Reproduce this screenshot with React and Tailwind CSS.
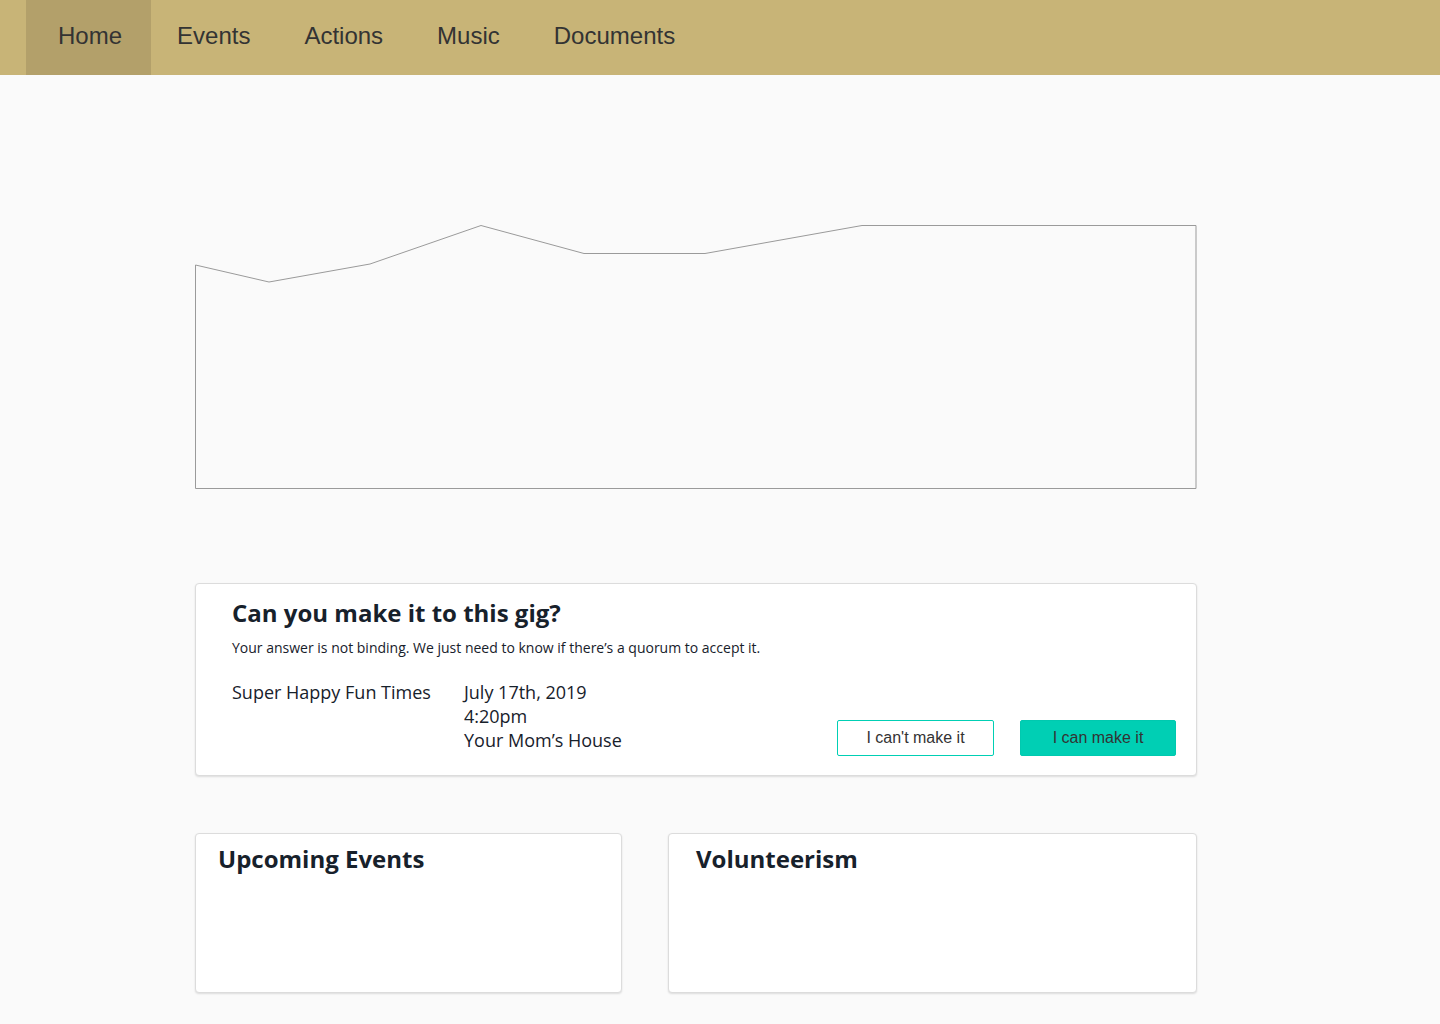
export default function App() {
  const sans = { fontFamily: '"Open Sans", sans-serif' };
  return (
    <div className="min-h-[1024px] w-full bg-[#fafafa]">
      <nav className="flex h-[75px] items-stretch bg-[#c8b477] pl-[26px] font-['Liberation_Sans',Arial,sans-serif] text-[24px] text-[#333333]">
        <a className="flex items-center bg-[#b3a06a] pb-[3px] pl-[32px] pr-[29px]">Home</a>
        <a className="flex items-center pb-[3px] pl-[26px] pr-[27px]">Events</a>
        <a className="flex items-center pb-[3px] px-[27px]">Actions</a>
        <a className="flex items-center pb-[3px] px-[27px]">Music</a>
        <a className="flex items-center pb-[3px] px-[27px]">Documents</a>
      </nav>

      <main className="ml-[195px] w-[1002px]" style={sans}>
        <div className="mt-[149px] h-[265px]">
          <svg width="1002" height="265" viewBox="0 0 1002 265" className="block">
            <polygon
              points="0.5,41 74,58 175,40 286,1.5 389,29.5 510,29.5 667,1.5 1001,1.5 1001,264.5 0.5,264.5"
              fill="none"
              stroke="#9a9a9a"
              strokeWidth="1"
            />
          </svg>
        </div>

        <section className="mt-[94px] h-[193px] rounded-[4px] border border-[#dcdcdc] bg-white pl-[36px] pr-[20px] pt-[12px] shadow-[0_1px_2px_rgba(0,0,0,0.12)]">
          <h2 className="text-[24px] font-bold leading-[33px] text-[#17212b]">Can you make it to this gig?</h2>
          <p className="mt-[9px] text-[14px] leading-[20px] text-[#17212b]">
            Your answer is not binding. We just need to know if there’s a quorum to accept it.
          </p>
          <div className="mt-[22px] flex items-start text-[18px] leading-[24px] text-[#17212b]">
            <div className="w-[232px]">Super Happy Fun Times</div>
            <div>
              <div>July 17th, 2019</div>
              <div>4:20pm</div>
              <div>Your Mom’s House</div>
            </div>
            <div className="ml-auto mt-[40px] flex gap-[26px] font-['Liberation_Sans',Arial,sans-serif] text-[16px]">
              <button className="h-[36px] w-[157px] rounded-[2px] border border-[#00cfb4] bg-white text-[#333333]">
                I can't make it
              </button>
              <button className="h-[36px] w-[156px] rounded-[2px] border border-[#00c9af] bg-[#00cfb4] text-[#333333]">
                I can make it
              </button>
            </div>
          </div>
        </section>

        <div className="mt-[57px] flex gap-[46px]">
          <section className="h-[160px] w-[427px] rounded-[4px] border border-[#dcdcdc] bg-white pl-[22px] pt-[8px] shadow-[0_1px_2px_rgba(0,0,0,0.12)]">
            <h2 className="text-[24px] font-bold leading-[33px] text-[#17212b]">Upcoming Events</h2>
          </section>
          <section className="h-[160px] w-[529px] rounded-[4px] border border-[#dcdcdc] bg-white pl-[27px] pt-[8px] shadow-[0_1px_2px_rgba(0,0,0,0.12)]">
            <h2 className="text-[24px] font-bold leading-[33px] text-[#17212b]">Volunteerism</h2>
          </section>
        </div>
      </main>
    </div>
  );
}
